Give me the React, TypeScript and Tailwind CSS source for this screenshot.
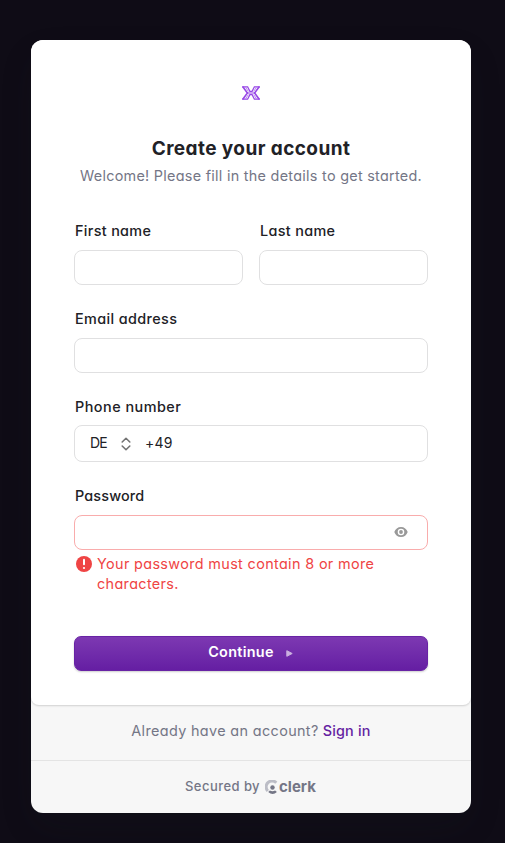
import type { ReactNode } from "react";

function Field({ label, labelClass, error, tall, children }: { label: string; labelClass: string; error?: boolean; tall?: boolean; children?: ReactNode }) {
  return (
    <label className="block min-w-0 flex-1">
      <span className={`ml-px block h-5 text-[14.4px] leading-5 font-medium whitespace-nowrap text-[#212126] ${labelClass}`}>{label}</span>
      <span
        className={`flex items-center rounded-[8px] border bg-white ${tall ? "mt-2 h-[37px]" : "mt-[9px] h-[35px]"} ${
          error ? "border-[#f9acac]" : "border-[#e0e0e1]"
        }`}
      >
        {children}
      </span>
    </label>
  );
}

function BrandMark() {
  return (
    <svg className="mx-auto block" width="18" height="14" viewBox="0 0 18 14" fill="none" stroke="#9747e6" strokeWidth="1.3">
      <path d="M0 .8h5.6l2.3 4.6h2.2L12.4.8H18" />
      <path d="M0 13.2h5.6l2.3-4.6h2.2l2.3 4.6H18" />
      <path d="M.8.8 5.4 7 .8 13.2M17.2.8 12.6 7l4.6 6.2" strokeWidth="1.6" />
      <path d="m3.6 1.4 2.8 4M3.6 12.6l2.8-4M14.4 1.4l-2.8 4M14.4 12.6l-2.8-4" stroke="#b988ef" strokeWidth="1" />
      <path d="M5 7h8" strokeWidth="1" />
    </svg>
  );
}

export default function App() {
  return (
    <main className="h-[843px] w-[505px] bg-[#0f0c16] pt-10 pl-[31px] font-['Inter','Liberation_Sans',sans-serif] [font-feature-settings:'cv11']">
      <div className="h-[773px] w-[440px] overflow-hidden rounded-[12px] bg-[#f7f7f7] shadow-[0_15px_35px_-5px_rgba(25,28,33,0.2)]">
        <section className="h-[665px] rounded-b-[8px] bg-white px-[43px] pt-[46px] shadow-[0_1px_2px_rgba(0,0,0,0.16)]">
          <BrandMark />
          <h1 className="mt-[37px] text-center text-[19px] leading-6 font-bold tracking-[0.42px] whitespace-nowrap text-[#212126]">Create your account</h1>
          <p className="mt-[5px] text-center text-[14.4px] leading-5 tracking-[0.28px] whitespace-nowrap text-[#747686]">Welcome! Please fill in the details to get started.</p>

          <form className="mt-[35px]">
            <div className="flex gap-4">
              <Field label="First name" labelClass="tracking-[0.33px]" />
              <Field label="Last name" labelClass="tracking-[0.33px]" />
            </div>
            <div className="mt-6 flex"><Field label="Email address" labelClass="tracking-[0.38px]" /></div>
            <div className="mt-6 flex">
              <Field label="Phone number" labelClass="tracking-[0.48px]" tall>
                <span className="mb-[2px] ml-[15px] w-[31px] text-[14px] tracking-[-0.9px] text-[#212126]">DE</span>
                <svg width="10" height="14" viewBox="0 0 10 14" fill="none" stroke="#737373" strokeWidth="1.6" strokeLinecap="round" strokeLinejoin="round"><path d="m1.2 5 3.8-3.7L8.8 5M1.2 9 5 12.7 8.8 9" /></svg>
                <span className="mb-[2px] ml-[14px] text-[14px] tracking-[0.2px] text-[#212126]">+49</span>
              </Field>
            </div>
            <div className="mt-6 flex">
              <Field label="Password" labelClass="tracking-[0.15px]" error>
                <svg className="mr-[19px] mb-[2px] ml-auto" width="14" height="12" viewBox="0 0 14 12"><path fill="#999" fillRule="evenodd" d="M7 1C3.8 1 1.3 3 .3 6c1 3 3.5 5 6.7 5s5.7-2 6.7-5C12.7 3 10.2 1 7 1Zm0 1.7a3.3 3.3 0 1 1 0 6.6 3.3 3.3 0 0 1 0-6.6Z" /><circle cx="7" cy="6" r="1.9" fill="#999" /></svg>
              </Field>
            </div>
            <div className="mt-1 ml-[2px] flex text-[#ef4444]">
              <svg className="mt-[2px] shrink-0" width="16" height="16" viewBox="0 0 16 16"><circle cx="8" cy="8" r="8" fill="#ef4444" /><path d="M8 3.8v4.5" stroke="white" strokeWidth="2" strokeLinecap="round" /><circle cx="8" cy="12" r="1.1" fill="white" /></svg>
              <p className="ml-[5px] text-[14.4px] leading-5 tracking-[0.36px] whitespace-nowrap">Your password must contain 8 or more<br />characters.</p>
            </div>
            <button type="button" className="mt-[42px] flex h-[35px] w-full items-center rounded-[7px] border border-[#6823a5] bg-linear-to-b from-[#7d38b2] to-[#651ea3] pb-[3px] pl-[133px] text-[14.4px] font-semibold text-white shadow-[0_1px_2px_rgba(0,0,0,0.2)]">
              <span className="w-[66px] tracking-[0.3px] whitespace-nowrap">Continue</span>
              <svg className="mt-[3px] ml-3" width="7" height="7" viewBox="0 0 7 7"><path d="M.8.7v5.6l5.4-2.8Z" fill="#cbb0e0" stroke="#cbb0e0" strokeLinejoin="round" /></svg>
            </button>
          </form>
        </section>
        <p className="flex h-[55px] justify-center pt-4 text-[14.4px] leading-5 whitespace-nowrap text-[#747686]">
          <span className="tracking-[0.36px]">Already have an account?</span>
          <a className="ml-1 font-medium tracking-[0.2px] text-[#651fa2]">Sign in</a>
        </p>
        <footer className="flex h-[53px] items-center border-t border-[#e4e4e4] pl-[154px] text-[#747686]">
          <span className="w-[80px] text-[13px] font-medium tracking-[0.45px] whitespace-nowrap">Secured by</span>
          <svg width="13" height="15" viewBox="0 0 13 15" fill="none">
            <path d="M11.3 2.7A5.6 5.6 0 1 0 2.8 11" stroke="#bcbdc6" strokeWidth="3" />
            <circle cx="7.5" cy="7.5" r="2.2" fill="#747686" />
            <path d="m3.2 12 1.7-1.5q2.6 1.4 5.2 0l1.8 1.5q-4.2 4.1-8.7 0Z" fill="#747686" />
          </svg>
          <span className="ml-px text-[15px] leading-5 font-bold">clerk</span>
        </footer>
      </div>
    </main>
  );
}
